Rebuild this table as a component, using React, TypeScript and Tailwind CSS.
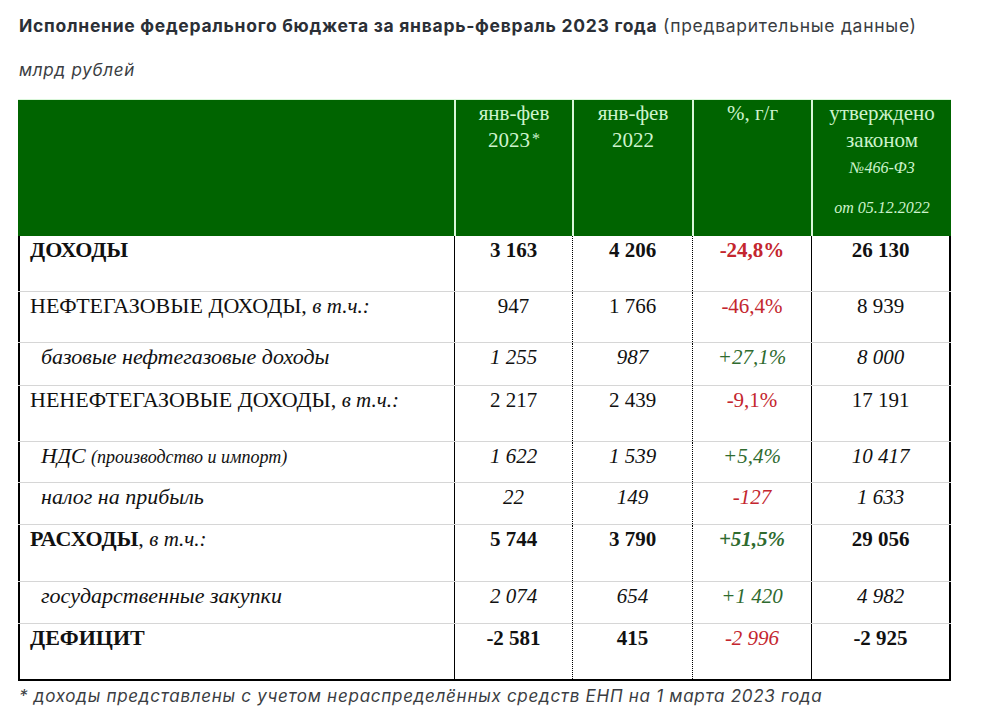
import type { ReactNode } from "react";

type Tone = "red" | "green" | undefined;

interface Row {
  label: ReactNode;
  values: string[];
  tone: Tone;
  bold?: boolean;
  italic?: boolean;
  pctBold?: boolean;
  pctItalic?: boolean;
  indent?: boolean;
  height: string;
}

const rows: Row[] = [
  {
    label: <span className="font-bold">ДОХОДЫ</span>,
    values: ["3 163", "4 206", "-24,8%", "26 130"],
    tone: "red",
    bold: true,
    pctBold: true,
    height: "h-[56px]",
  },
  {
    label: (
      <>
        НЕФТЕГАЗОВЫЕ ДОХОДЫ, <i className="text-[21px]">в т.ч.:</i>
      </>
    ),
    values: ["947", "1 766", "-46,4%", "8 939"],
    tone: "red",
    height: "h-[51px]",
  },
  {
    label: <i>базовые нефтегазовые доходы</i>,
    values: ["1 255", "987", "+27,1%", "8 000"],
    tone: "green",
    italic: true,
    pctItalic: true,
    indent: true,
    height: "h-[43px]",
  },
  {
    label: (
      <>
        НЕНЕФТЕГАЗОВЫЕ ДОХОДЫ, <i className="text-[21px]">в т.ч.:</i>
      </>
    ),
    values: ["2 217", "2 439", "-9,1%", "17 191"],
    tone: "red",
    height: "h-[56px]",
  },
  {
    label: (
      <i>
        НДС <span className="text-[18px]">(производство и импорт)</span>
      </i>
    ),
    values: ["1 622", "1 539", "+5,4%", "10 417"],
    tone: "green",
    italic: true,
    pctItalic: true,
    indent: true,
    height: "h-[41px]",
  },
  {
    label: <i>налог на прибыль</i>,
    values: ["22", "149", "-127", "1 633"],
    tone: "red",
    italic: true,
    pctItalic: true,
    indent: true,
    height: "h-[42px]",
  },
  {
    label: (
      <>
        <span className="font-bold">РАСХОДЫ</span>,{" "}
        <i className="text-[21px]">в т.ч.:</i>
      </>
    ),
    values: ["5 744", "3 790", "+51,5%", "29 056"],
    tone: "green",
    bold: true,
    pctBold: true,
    pctItalic: true,
    height: "h-[57px]",
  },
  {
    label: <i>государственные закупки</i>,
    values: ["2 074", "654", "+1 420", "4 982"],
    tone: "green",
    italic: true,
    pctItalic: true,
    indent: true,
    height: "h-[42px]",
  },
  {
    label: <span className="font-bold">ДЕФИЦИТ</span>,
    values: ["-2 581", "415", "-2 996", "-2 925"],
    tone: "red",
    bold: true,
    pctItalic: true,
    height: "h-[57px]",
  },
];

function BodyRow({ row, last }: { row: Row; last: boolean }) {
  const valueStyle = `${row.bold ? "font-bold" : ""} ${row.italic ? "italic" : ""}`;
  const pctStyle = `${row.pctBold ? "font-bold" : ""} ${row.pctItalic ? "italic" : ""} ${
    row.tone === "red" ? "text-[#c4262e]" : "text-[#2f6b2f]"
  }`;

  return (
    <div
      className={`grid grid-cols-[436px_118px_120px_119px_140px] ${row.height} ${
        last ? "border-b-2 border-black" : "border-b border-[#d6d6d6]"
      }`}
    >
      <div
        className={`border-l-2 border-black pt-0 text-[22px] ${
          row.indent ? "pl-[21px]" : "pl-[10px]"
        }`}
      >
        {row.label}
      </div>
      <div className={`border-l border-black pt-[1px] text-center ${valueStyle}`}>
        {row.values[0]}
      </div>
      <div
        className={`border-l border-dotted border-black pt-[1px] text-center ${valueStyle}`}
      >
        {row.values[1]}
      </div>
      <div
        className={`border-l border-dotted border-black pt-[1px] text-center ${pctStyle}`}
      >
        {row.values[2]}
      </div>
      <div
        className={`border-l border-r-2 border-black pt-[1px] text-center ${valueStyle}`}
      >
        {row.values[3]}
      </div>
    </div>
  );
}

export default function App() {
  return (
    <div className="w-[1003px] h-[718px] bg-white overflow-hidden font-['Inter',sans-serif] text-[#2b2f36] tracking-[0.045em]">
      <div className="pl-[19px] pt-[14px] text-[17.5px] leading-[24px]">
        <span className="font-bold">
          Исполнение федерального бюджета за январь-февраль 2023 года
        </span>{" "}
        <span className="text-[#3a3d42]">(предварительные данные)</span>
      </div>
      <div className="pl-[19px] pt-[20px] text-[17px] leading-[24px] italic text-[#3a3d42]">
        млрд рублей
      </div>

      <div className="ml-[18px] mt-[17px] w-[933px] font-['Liberation_Serif',serif] text-[21px] leading-[27px] tracking-normal text-[#111]">
        {/* Header */}
        <div className="grid grid-cols-[436px_118px_120px_119px_140px] h-[137px] bg-[#006400] text-[#cdf3cd] border-t border-[#d9f7d9]">
          <div />
          <div className="border-l-2 border-[#d9f7d9] text-center">
            <div>янв-фев</div>
            <div>
              2023<sup className="text-[16px] relative -top-[3px] ml-[2px]">*</sup>
            </div>
          </div>
          <div className="border-l-2 border-[#d9f7d9] text-center">
            <div>янв-фев</div>
            <div>2022</div>
          </div>
          <div className="border-l-2 border-[#d9f7d9] text-center">
            <div>%, г/г</div>
          </div>
          <div className="border-l-2 border-[#d9f7d9] text-center">
            <div>утверждено</div>
            <div>законом</div>
            <div className="italic text-[16px]">№466-Ф3</div>
            <div className="italic text-[16px] mt-[13px]">от 05.12.2022</div>
          </div>
        </div>

        {/* Body */}
        {rows.map((row, i) => (
          <BodyRow key={i} row={row} last={i === rows.length - 1} />
        ))}
      </div>

      <div className="pl-[19px] pt-[3px] text-[17px] leading-[24px] italic text-[#3a3d42]">
        * доходы представлены с учетом нераспределённых средств ЕНП на 1 марта
        2023 года
      </div>
    </div>
  );
}
